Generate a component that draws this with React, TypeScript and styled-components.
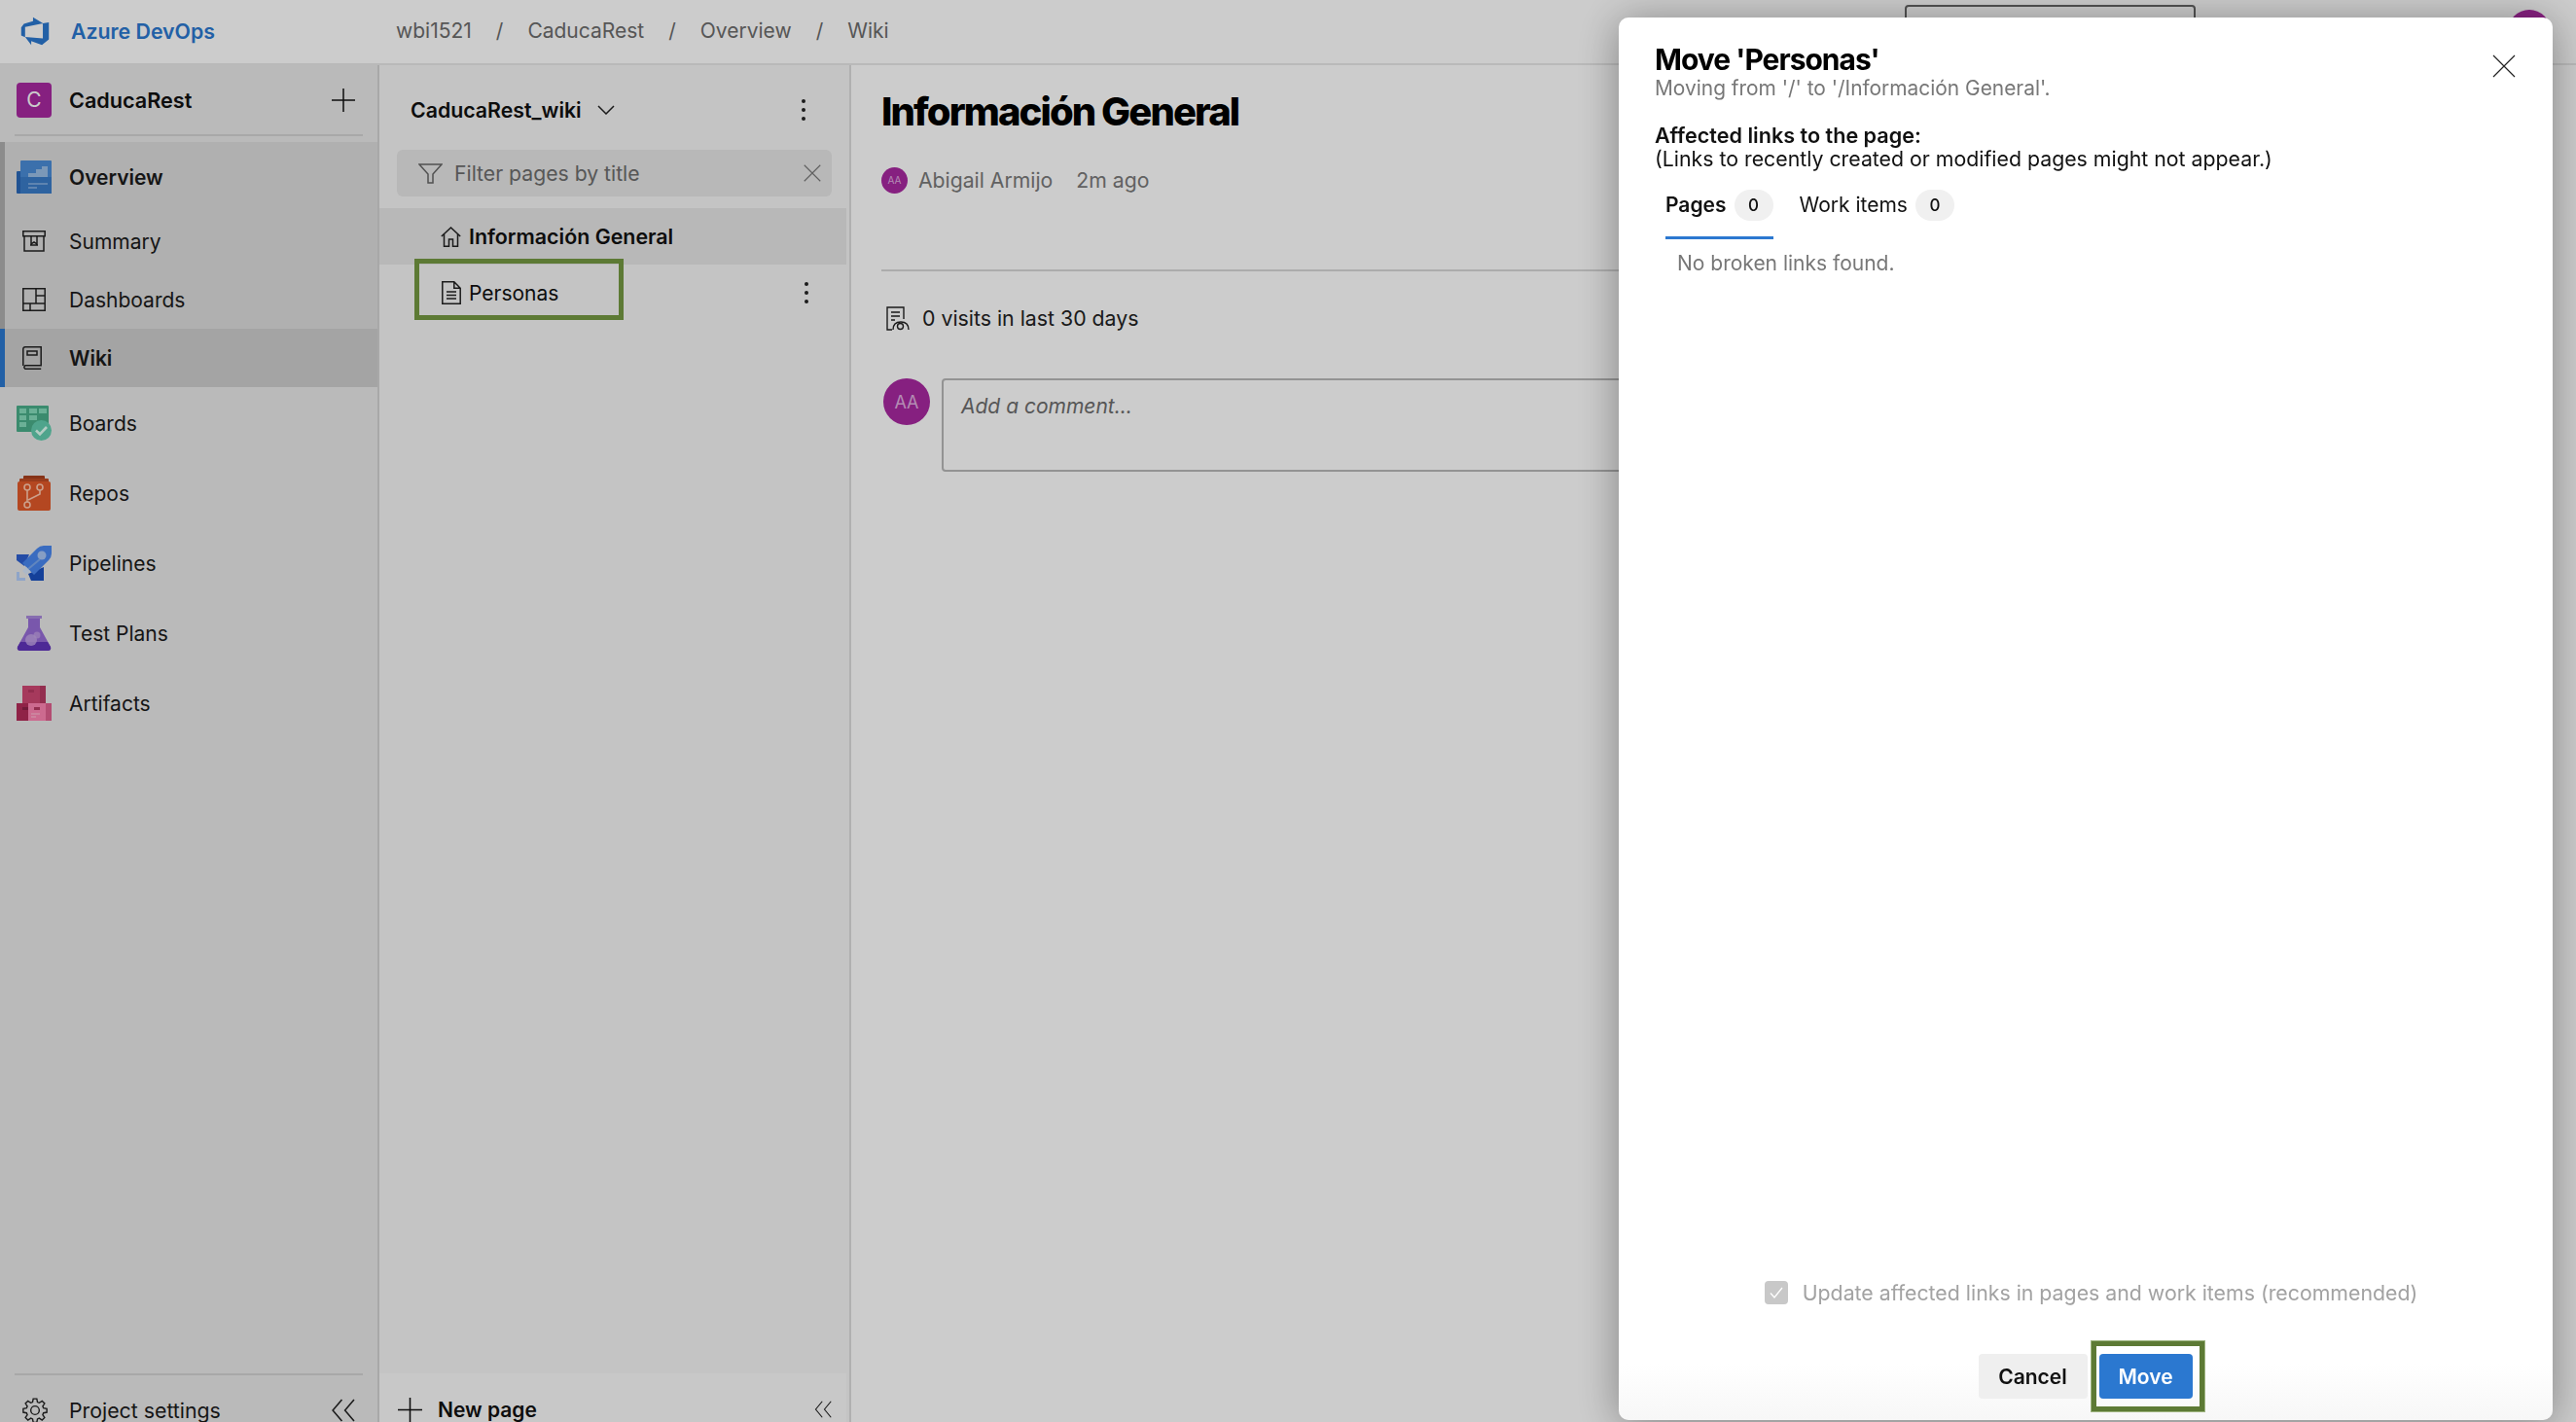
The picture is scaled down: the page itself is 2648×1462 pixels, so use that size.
import React from "react";
import styled, { createGlobalStyle } from "styled-components";

const Global = createGlobalStyle`
  html, body { margin: 0; padding: 0; background: #fff; }
  body { font-family: Inter, "Liberation Sans", sans-serif; color: #000; }
  * { box-sizing: border-box; }
`;

const Page = styled.div`
  width: 2648px; height: 1462px; overflow: hidden; display: flex; flex-direction: column; position: relative;
`;
const Header = styled.header`
  height: 67px; flex: none; display: flex; align-items: center; border-bottom: 2px solid #e8e8e8; padding: 0 26px 2px 20px; background: #fff;
`;
const Brand = styled.span`
  margin-left: 21px; width: 334px; font-size: 21.3px; font-weight: 600; color: #2b78d0; white-space: nowrap;
`;
const Crumbs = styled.nav`
  display: flex; gap: 25px; font-size: 21px; color: #6c6c6c; white-space: nowrap;
`;
const Search = styled.div`
  margin-left: auto; width: 299px; height: 54px; border: 2px solid #666; border-radius: 4px;
`;
const TopAvatar = styled.div`
  margin-left: 321px; width: 44px; height: 44px; border-radius: 50%; background: #a828a0;
`;
const Body = styled.div`
  flex: 1; min-height: 0; display: flex;
`;
const Sidebar = styled.aside`
  width: 390px; flex: none; display: flex; flex-direction: column; background: #e9e9e9; border-right: 2px solid #d2d2d2;
`;
const ProjectRow = styled.div`
  height: 71px; display: flex; align-items: center; padding: 0 23px 0 17px; gap: 18px;
`;
const ProjectTile = styled.div`
  width: 36px; height: 36px; border-radius: 4px; background: #a828a0; color: #fff; font-size: 21px; display: flex; align-items: center; justify-content: center;
`;
const ProjectName = styled.span`
  font-size: 21.6px; font-weight: 600; color: #111; flex: 1;
`;
const Rule = styled.div`
  height: 2px; margin: 0 15px; background: #d2d2d2; flex: none;
`;
const NavGroup = styled.div`
  margin: 6px 0 1px; background: #dcdcdc;
`;
const NavRow = styled.div<{ $h: number; $bar?: string; $active?: boolean }>`
  height: ${(p) => p.$h}px; display: flex; align-items: center; padding-left: 17px; gap: 18px;
  font-size: 21px; color: #1b1b1b;
  font-weight: ${(p) => (p.$active ? 600 : 400)};
  background: ${(p) => (p.$active ? "#cecece" : "transparent")};
  box-shadow: ${(p) => (p.$bar ? `inset 5px 0 0 ${p.$bar}` : "none")};
`;
const IconCell = styled.span`
  width: 36px; height: 36px; flex: none; display: flex; align-items: center; justify-content: center;
`;
const GlyphCell = styled(IconCell)`
  justify-content: flex-start; padding-left: 6px;
`;
const SideFoot = styled.div`
  margin-top: auto; flex: none;
`;
const FootRow = styled.div`
  height: 48px; padding: 24px 23px 0 17px; display: flex; align-items: center; gap: 18px; font-size: 21.3px; color: #1b1b1b;
`;
const Grow = styled.span`
  flex: 1; white-space: nowrap;
`;
const WikiPanel = styled.section`
  width: 485px; flex: none; display: flex; flex-direction: column; background: #f6f6f6; border-right: 2px solid #dcdcdc; padding-right: 3px;
`;
const WikiHead = styled.div`
  height: 70px; margin-top: 11px; display: flex; align-items: center; padding: 0 42px 0 32px; font-size: 21.3px; font-weight: 600; color: #111;
`;
const WikiName = styled.span`
  margin-right: 16px;
`;
const Push = styled.span`
  margin-left: auto; display: flex;
`;
const Filter = styled.div`
  height: 48px; margin: 6px 15px 0 18px; border-radius: 6px; background: #e6e6e6; display: flex; align-items: center; padding: 0 11px 0 22px; gap: 12px; font-size: 21.2px; color: #6d6d6d;
`;
const Tree = styled.div`
  margin-top: 12px;
`;
const TreeRow = styled.div<{ $selected?: boolean }>`
  height: 58px; display: flex; align-items: center; padding: 0 39px 0 63px; gap: 8px; font-size: ${(p) => (p.$selected ? 21.4 : 21)}px;
  font-weight: ${(p) => (p.$selected ? 600 : 400)};
  color: #111;
  background: ${(p) => (p.$selected ? "#e6e6e6" : "transparent")};
`;
const TreeIcon = styled.span`
  width: 21px; display: flex; justify-content: center; flex: none;
`;
const WikiFoot = styled.div`
  margin-top: auto; height: 50px; flex: none; background: #fbfbfb; display: flex; align-items: center; padding: 24px 15px 0 19px; gap: 16px; font-size: 21px; font-weight: 600; color: #111;
`;
const Main = styled.main`
  flex: 1; min-width: 0; padding: 24px 40px 0 31px; background: #fff;
`;
const PageTitle = styled.h1`
  margin: 0; font-size: 40px; line-height: 48px; font-weight: 800; letter-spacing: -1.9px; color: #000; white-space: nowrap;
`;
const Meta = styled.div`
  margin-top: 32px; display: flex; align-items: center; height: 28px; font-size: 21.2px; color: #7a7a7a;
`;
const MetaName = styled.span`
  margin: 0 24px 0 11px;
`;
const Avatar = styled.div<{ $size: number; $font: number }>`
  width: ${(p) => p.$size}px; height: ${(p) => p.$size}px; flex: none; border-radius: 50%; background: #a828a0; color: #e0b0e0;
  font-size: ${(p) => p.$font}px; display: flex; align-items: center; justify-content: center;
`;
const MainRule = styled.div`
  margin-top: 78px; height: 2px; background: #d8d8d8;
`;
const Visits = styled.div`
  margin-top: 35px; padding-left: 5px; height: 26px; display: flex; align-items: center; gap: 12px; font-size: 21.3px; color: #222;
`;
const CommentRow = styled.div`
  margin-top: 49px; padding-left: 2px; display: flex; gap: 12px;
`;
const CommentBox = styled.div`
  flex: 1; height: 96px; border: 2px solid #b8b8b8; border-radius: 4px; padding: 14px 18px; font-size: 21px; font-style: italic; color: #6d6d6d;
`;
const Scrim = styled.div`
  position: fixed; inset: 0; background: rgba(0, 0, 0, 0.2);
`;
const Dialog = styled.div`
  position: fixed; top: 18px; right: 24px; bottom: 2px; width: 960px; border-radius: 10px; display: flex; flex-direction: column;
  background: linear-gradient(#fff 0, #fff 96%, #f7f7f7 100%); box-shadow: 0 4px 44px rgba(0, 0, 0, 0.36); padding: 25px 38px 22px 37px;
`;
const DialogTop = styled.div`
  display: flex; justify-content: space-between; align-items: flex-start;
`;
const DialogTitle = styled.h2`
  margin: 0; font-size: 30px; line-height: 36px; font-weight: 700; letter-spacing: -1px; color: #000;
`;
const CloseBtn = styled.span`
  display: flex; margin-top: 13px;
`;
const Sub = styled.div`
  font-size: 20.9px; line-height: 24px; color: #777;
`;
const Affected = styled.div`
  margin-top: 24px; font-size: 21.3px; line-height: 24px; color: #111;
`;
const Strong = styled.div`
  font-weight: 600; font-size: 21.6px;
`;
const Tabs = styled.div`
  margin-top: 12px; padding-left: 11px; display: flex; gap: 27px;
`;
const Tab = styled.div<{ $active?: boolean }>`
  height: 59px; padding-top: 8px; display: flex; align-items: flex-start; gap: 8px; font-size: 21px; line-height: 32px;
  font-weight: ${(p) => (p.$active ? 600 : 400)};
  color: #111;
  border-bottom: 3px solid ${(p) => (p.$active ? "#2b78d0" : "transparent")};
`;
const Count = styled.span`
  width: 40px; height: 32px; border-radius: 16px; background: #f0f0f0; font-size: 17px; font-weight: 500; display: flex; align-items: center; justify-content: center;
`;
const Empty = styled.div`
  margin: 13px 0 0 23px; font-size: 21px; line-height: 24px; color: #777;
`;
const CheckRow = styled.div`
  margin-top: auto; padding-left: 12px; display: flex; justify-content: center; align-items: center; gap: 15px; font-size: 21.3px; color: #a2a2a2;
`;
const CheckBox = styled.span`
  width: 24px; height: 24px; border-radius: 4px; background: #c8c8c8; display: flex; align-items: center; justify-content: center;
`;
const Buttons = styled.div`
  margin-top: 50px; display: flex; justify-content: center; gap: 12px;
`;
const Btn = styled.button<{ $primary?: boolean }>`
  height: 46px; border: 0; border-radius: 4px; padding: 0; font-family: inherit; font-size: 21px; font-weight: 600;
  width: ${(p) => (p.$primary ? 96 : 112)}px;
  background: ${(p) => (p.$primary ? "#2b78d0" : "#efefef")};
  color: ${(p) => (p.$primary ? "#fff" : "#111")};
`;
const Spot = styled.span`
  position: relative; display: flex;
`;
const MoveMark = styled.span`
  position: absolute; inset: -13px -12px -13px -8px; border: 5px solid #5d7a35; outline: 1px solid #9db37f; pointer-events: none;
`;
const PersonasMark = styled.div`
  position: fixed; left: 426px; top: 266px; width: 215px; height: 63px; border: 5px solid #5d7a35; pointer-events: none;
`;

const Logo = () => (
  <svg width="32" height="32" viewBox="0 0 18 18"><path fill="#2b78d0" d="M17 4v9.74l-4 3.28-6.2-2.26V17l-3.51-4.59 10.23.8V4.44zm-3.41.49L7.85 1v2.29L2.58 4.84 1 6.87v4.61l2.26 1V6.57z" /></svg>
);
const Plus = ({ s = 24, c = "#111" }: { s?: number; c?: string }) => (
  <svg width={s} height={s} viewBox="0 0 24 24"><path d="M12 0v24M0 12h24" stroke={c} strokeWidth="1.5" fill="none" /></svg>
);
const OverviewIcon = () => (
  <svg width="36" height="34" viewBox="0 0 36 34">
    <rect x="0" y="11" width="8" height="23" rx="1" fill="#2a68b8" />
    <rect x="4" y="0" width="32" height="34" rx="1" fill="#4a8cd8" />
    <rect x="4" y="17" width="32" height="17" fill="#3a7cc8" />
    <path d="M12 17v-4h8v-4h6V6h6v11z" fill="#a8c8ea" opacity=".85" />
    <path d="M12 24h20M12 28h9" stroke="#8ab4e4" strokeWidth="1.4" />
  </svg>
);
const SummaryIcon = () => (
  <svg width="24" height="22" viewBox="0 0 24 22" fill="none" stroke="#222" strokeWidth="1.5">
    <path d="M.8.8h22.4v5H.8zM2 5.8V21h20V5.8M9 5.8v8l3-2 3 2v-8M8 15h8" />
  </svg>
);
const DashIcon = () => (
  <svg width="24" height="24" viewBox="0 0 24 24" fill="none" stroke="#222" strokeWidth="1.5">
    <path d="M.8.8h22.4v22.4H.8zM.8 16h22.4M14 .8V16M14 8h9.2M8 16v7.2" />
  </svg>
);
const WikiIcon = () => (
  <svg width="20" height="24" viewBox="0 0 20 24" fill="none" stroke="#222" strokeWidth="1.5">
    <path d="M.8 20V2.8a2 2 0 0 1 2-2h16.4v19H2.8a2 2 0 0 0 0 3.4h16.4" /><rect x="5" y="5" width="10" height="4" />
  </svg>
);
const BoardsIcon = () => (
  <svg width="36" height="36" viewBox="0 0 36 36">
    <rect x="0" y="0" width="33" height="27" rx="1" fill="#4aae8a" />
    <path d="M3 3h7v5H3zM13 3h8v5h-8zM23 3h8v5h-8zM3 10h7v5H3zM13 10h8v5h-8zM3 17h7v5H3z" fill="#9ff0d2" opacity=".7" />
    <circle cx="25.500" cy="25.500" r="10.500" fill="#63ceaf" />
    <path d="M20 25.500l4 4 7-7.500" stroke="#e0fff4" strokeWidth="2.600" fill="none" />
  </svg>
);
const ReposIcon = () => (
  <svg width="36" height="36" viewBox="0 0 36 36">
    <rect x="7" y="0" width="22" height="6" rx="1" fill="#a8401f" />
    <rect x="3" y="3" width="30" height="6" rx="1" fill="#c04c24" />
    <rect x="1" y="6" width="34" height="30" rx="2" fill="#e2592a" />
    <g fill="none" stroke="#ffc8ae" strokeWidth="1.600">
      <circle cx="11" cy="12" r="3" /><circle cx="24" cy="12" r="3" /><circle cx="11" cy="30" r="3" />
      <path d="M11 15v12M24 15v4L12 25" />
    </g>
  </svg>
);
const PipesIcon = () => (
  <svg width="36" height="36" viewBox="0 0 36 36">
    <path d="M0 9h13L8 21 0 15z" fill="#2d5fd0" />
    <path d="M28 22v14H15l-3-7z" fill="#1a50c0" />
    <path d="M21 3q3-3 7-3h8v8q0 4-3 7L18 30 6 18z" fill="#4987f0" />
    <circle cx="26" cy="10" r="4.500" fill="#a8c6f5" />
    <path d="M12 24L24 14" stroke="#7aa8ee" strokeWidth="2" />
    <path d="M0 36V27h3v6h6v3z" fill="#b2cefa" />
    <path d="M6 26l4 4 4-4-4-4z" fill="#d8e6fb" />
  </svg>
);
const FlaskIcon = () => (
  <svg width="36" height="36" viewBox="0 0 36 36">
    <rect x="10" y="0" width="16" height="3" fill="#a98adc" />
    <path d="M12 3h12v9l11 20q1 4-3 4H4q-4 0-3-4l11-20z" fill="#986dd8" />
    <path d="M4 27h28l3 5q1 4-3 4H4q-4 0-3-4z" fill="#6134bc" />
    <circle cx="15" cy="25" r="6" fill="#c7a9e8" opacity=".8" />
    <circle cx="21" cy="20" r="3.500" fill="#c7a9e8" opacity=".7" />
  </svg>
);
const ArtIcon = () => (
  <svg width="36" height="36" viewBox="0 0 36 36">
    <rect x="6" y="0" width="24" height="18" fill="#d04873" />
    <rect x="24" y="0" width="6" height="18" fill="#b83a63" />
    <rect x="12" y="4" width="6" height="3" fill="#b83a63" />
    <rect x="0" y="18" width="14" height="18" fill="#b32c59" />
    <rect x="6" y="22" width="6" height="3" fill="#8d2146" />
    <rect x="12" y="18" width="24" height="18" fill="#ff85b3" />
    <rect x="30" y="18" width="6" height="18" fill="#e0608f" />
    <rect x="18" y="22" width="6" height="3" fill="#b83a63" />
    <path d="M15 29h9M15 32h5" stroke="#ffc2d8" strokeWidth="1" />
  </svg>
);
const Gear = () => (
  <svg width="26" height="26" viewBox="0 0 24 24" fill="none" stroke="#222" strokeWidth="1.300">
    <path d="M10.300 1h3.400l.6 3.200 1.700.7 2.700-1.800 2.400 2.400-1.800 2.700.7 1.700 3.200.6v3.400l-3.200.6-.7 1.700 1.800 2.700-2.400 2.400-2.700-1.800-1.700.7-.6 3.200h-3.400l-.6-3.200-1.700-.7-2.700 1.800-2.400-2.400 1.800-2.700-.7-1.700-3.200-.6v-3.400l3.200-.6.7-1.700-1.800-2.700 2.400-2.400 2.700 1.800 1.700-.7z" />
    <circle cx="12" cy="12" r="4" />
  </svg>
);
const DoubleChev = ({ w, h }: { w: number; h: number }) => (
  <svg width={w} height={h} viewBox="0 0 24 24" preserveAspectRatio="none" fill="none" stroke="#222" strokeWidth="1.500">
    <path d="M11 1L2 12l9 11M23 1l-9 11 9 11" />
  </svg>
);
const Chevron = () => (
  <svg width="18" height="10" viewBox="0 0 18 10" fill="none" stroke="#222" strokeWidth="1.500"><path d="M1 1l8 8 8-8" /></svg>
);
const Kebab = () => (
  <svg width="4" height="22" viewBox="0 0 4 22" fill="#222"><circle cx="2" cy="2" r="2" /><circle cx="2" cy="11" r="2" /><circle cx="2" cy="20" r="2" /></svg>
);
const Funnel = () => (
  <svg width="25" height="21" viewBox="0 0 25 21" fill="none" stroke="#666" strokeWidth="1.500"><path d="M1 1h23l-9 10v9h-5v-9z" /></svg>
);
const Cross = ({ s, c, w = 1.5 }: { s: number; c: string; w?: number }) => (
  <svg width={s} height={s} viewBox="0 0 24 24" fill="none" stroke={c} strokeWidth={w}><path d="M1 1l22 22M23 1L1 23" /></svg>
);
const Home = () => (
  <svg width="21" height="21" viewBox="0 0 21 21" fill="none" stroke="#222" strokeWidth="1.500"><path d="M.8 10L10.500 1l9.700 9M3.500 8v12.200h5V13h4v7.200h5V8" /></svg>
);
const Doc = () => (
  <svg width="20" height="24" viewBox="0 0 20 24" fill="none" stroke="#222" strokeWidth="1.500"><path d="M.8.8h12l6.400 6.400v16H.8zM12.800.8v6.400h6.400M5 11h10M5 14.500h10M5 18h10" /></svg>
);
const VisitIcon = () => (
  <svg width="25" height="25" viewBox="0 0 25 25" fill="none" stroke="#222" strokeWidth="1.400"><path d="M6 24H1V1h17v12M5 6h9M5 10h9M5 14h4M7 24q0-8 8-8t8 8" /><circle cx="14.500" cy="20.500" r="3" /></svg>
);

const crumbs = ["wbi1521", "/", "CaducaRest", "/", "Overview", "/", "Wiki"];
const services: [string, React.ReactNode][] = [
  ["Boards", <BoardsIcon />],
  ["Repos", <ReposIcon />],
  ["Pipelines", <PipesIcon />],
  ["Test Plans", <FlaskIcon />],
  ["Artifacts", <ArtIcon />],
];

export default function App() {
  return (
    <Page>
      <Global />
      <Header>
        <Logo />
        <Brand>Azure DevOps</Brand>
        <Crumbs>{crumbs.map((c, i) => <span key={i}>{c}</span>)}</Crumbs>
        <Search />
        <TopAvatar />
      </Header>
      <Body>
        <Sidebar>
          <ProjectRow>
            <ProjectTile>C</ProjectTile>
            <ProjectName>CaducaRest</ProjectName>
            <Plus />
          </ProjectRow>
          <Rule />
          <NavGroup>
            <NavRow $h={72} $bar="#b0b0b0" $active={false}><IconCell><OverviewIcon /></IconCell><OverviewLabel>Overview</OverviewLabel></NavRow>
            <NavRow $h={60} $bar="#b0b0b0"><GlyphCell><SummaryIcon /></GlyphCell>Summary</NavRow>
            <NavRow $h={60} $bar="#b0b0b0"><GlyphCell><DashIcon /></GlyphCell>Dashboards</NavRow>
            <NavRow $h={60} $bar="#2b78d0" $active><GlyphCell><WikiIcon /></GlyphCell>Wiki</NavRow>
          </NavGroup>
          {services.map(([label, icon]) => (
            <NavRow key={label} $h={72}><IconCell>{icon}</IconCell>{label}</NavRow>
          ))}
          <SideFoot>
            <Rule />
            <FootRow>
              <GlyphCell><Gear /></GlyphCell>
              <Grow>Project settings</Grow>
              <DoubleChev w={25} h={24} />
            </FootRow>
          </SideFoot>
        </Sidebar>
        <WikiPanel>
          <WikiHead>
            <WikiName>CaducaRest_wiki</WikiName>
            <Chevron />
            <Push><Kebab /></Push>
          </WikiHead>
          <Filter>
            <Funnel />
            <Grow>Filter pages by title</Grow>
            <Cross s={18} c="#777" />
          </Filter>
          <Tree>
            <TreeRow $selected><TreeIcon><Home /></TreeIcon>Información General</TreeRow>
            <TreeRow><TreeIcon><Doc /></TreeIcon>Personas<Push><Kebab /></Push></TreeRow>
          </Tree>
          <WikiFoot>
            <Plus s={25} />
            <Grow>New page</Grow>
            <DoubleChev w={18} h={18} />
          </WikiFoot>
        </WikiPanel>
        <Main>
          <PageTitle>Información General</PageTitle>
          <Meta>
            <Avatar $size={27} $font={10}>AA</Avatar>
            <MetaName>Abigail Armijo</MetaName>
            <span>2m ago</span>
          </Meta>
          <MainRule />
          <Visits><VisitIcon /><span>0 visits in last 30 days</span></Visits>
          <CommentRow>
            <Avatar $size={48} $font={18}>AA</Avatar>
            <CommentBox>Add a comment...</CommentBox>
          </CommentRow>
        </Main>
      </Body>
      <Scrim />
      <PersonasMark />
      <Dialog>
        <DialogTop>
          <div>
            <DialogTitle>Move 'Personas'</DialogTitle>
            <Sub>Moving from '/' to '/Información General'.</Sub>
          </div>
          <CloseBtn><Cross s={24} c="#222" w={1.2} /></CloseBtn>
        </DialogTop>
        <Affected>
          <Strong>Affected links to the page:</Strong>
          (Links to recently created or modified pages might not appear.)
        </Affected>
        <Tabs>
          <Tab $active>Pages<Count>0</Count></Tab>
          <Tab>Work items<Count>0</Count></Tab>
        </Tabs>
        <Empty>No broken links found.</Empty>
        <CheckRow>
          <CheckBox>
            <svg width="14" height="12" viewBox="0 0 14 12" fill="none" stroke="#fff" strokeWidth="1.300"><path d="M1 6.500L5 11l8-10" /></svg>
          </CheckBox>
          <span>Update affected links in pages and work items (recommended)</span>
        </CheckRow>
        <Buttons>
          <Btn>Cancel</Btn>
          <Spot><Btn $primary>Move</Btn><MoveMark /></Spot>
        </Buttons>
      </Dialog>
    </Page>
  );
}

const OverviewLabel = styled.span`
  font-weight: 600;
`;
